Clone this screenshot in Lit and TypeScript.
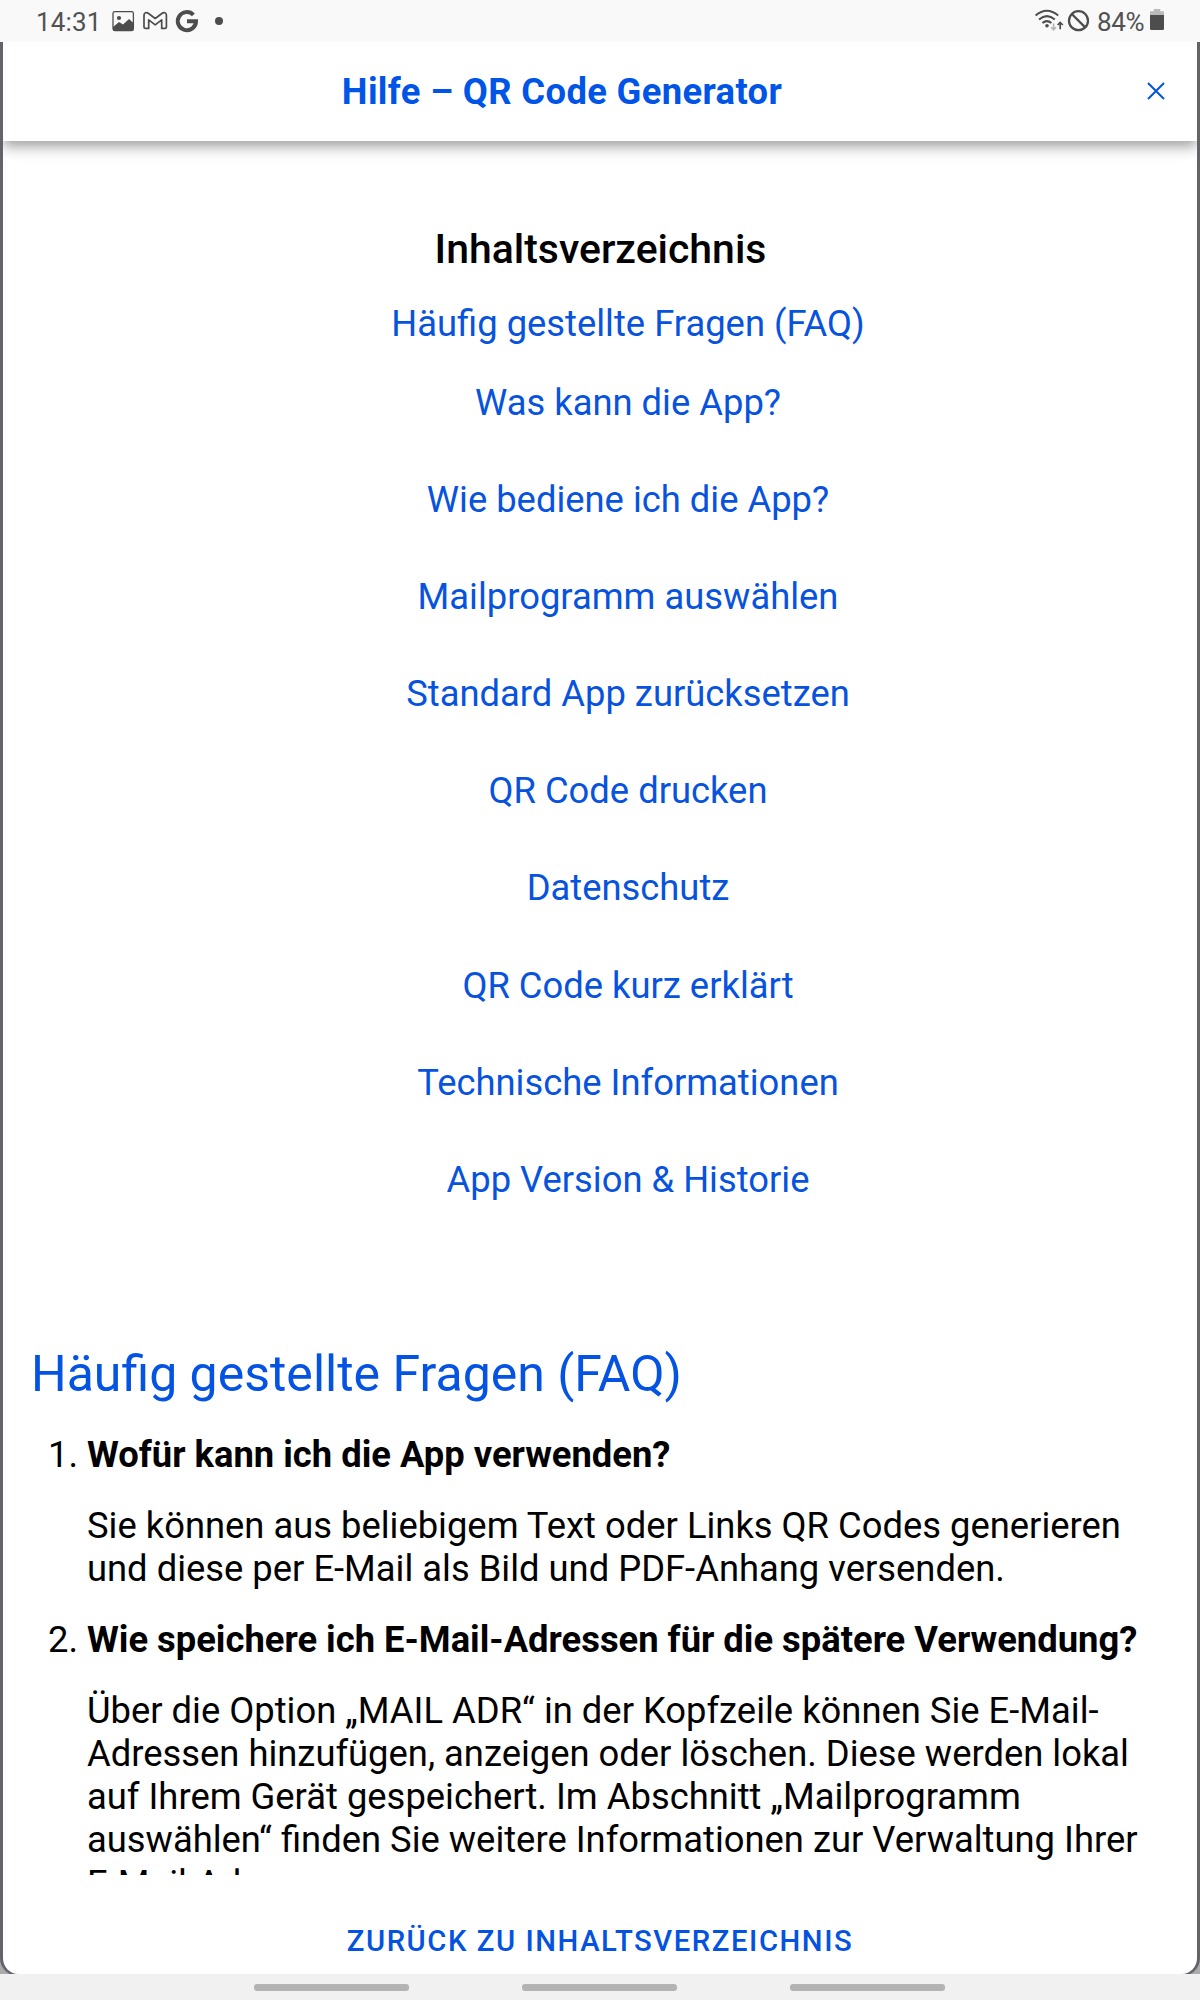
import { LitElement, html, css, svg } from "lit";
import { customElement } from "lit/decorators.js";

const TOC = [
  "Was kann die App?",
  "Wie bediene ich die App?",
  "Mailprogramm auswählen",
  "Standard App zurücksetzen",
  "QR Code drucken",
  "Datenschutz",
  "QR Code kurz erklärt",
  "Technische Informationen",
  "App Version & Historie",
];

const FAQ = [
  {
    q: "Wofür kann ich die App verwenden?",
    a: "Sie können aus beliebigem Text oder Links QR Codes generieren und diese per E-Mail als Bild und PDF-Anhang versenden.",
  },
  {
    q: "Wie speichere ich E-Mail-Adressen für die spätere Verwendung?",
    a: "Über die Option „MAIL ADR“ in der Kopfzeile können Sie E-Mail-Adressen hinzufügen, anzeigen oder löschen. Diese werden lokal auf Ihrem Gerät gespeichert. Im Abschnitt „Mailprogramm auswählen“ finden Sie weitere Informationen zur Verwaltung Ihrer E-Mail-Adressen.",
  },
];

@customElement("status-bar")
export class StatusBar extends LitElement {
  static styles = css`
    :host {
      display: flex;
      justify-content: space-between;
      height: 42px;
      background: #f9f9f9;
      color: #525252;
      font: 400 26px/42px Roboto, sans-serif;
    }
    .side { display: flex; }
    .left { padding-left: 36px; }
    .right { padding-right: 33px; }
    .time { width: 74px; letter-spacing: 0.150px; }
    .level { width: 51px; letter-spacing: -0.300px; }
    svg { display: block; }
    .time, .level { padding-top: 1px; box-sizing: border-box; }
  `;
  render() {
    return html`
      <div class="side left">
        <span class="time">14:31</span>
        <svg width="120" height="42" viewBox="110 0 120 42">
          ${svg`
          <rect x="113" y="11.7" width="20.4" height="18.8" rx="1.8" fill="none" stroke="#4d4d4d" stroke-width="1.3"/>
          <circle cx="119" cy="18" r="2.1" fill="#4d4d4d"/>
          <path d="M113 27l6-5 4 2.6 6-5.6 4.4 4v7.5H113z" fill="#4d4d4d"/>
          <path d="M144 27V15.200c0-2.600 2.500-3.300 4.200-2l7 5.300 7-5.300c1.700-1.300 4.200-.6 4.200 2V27c0 .9-.6 1.400-1.400 1.400h-3.300V19.800L155.200 24.800l-6.500-5v8.600h-3.300c-.8 0-1.400-.5-1.400-1.400z" fill="none" stroke="#4d4d4d" stroke-width="1.700" stroke-linejoin="round"/>
          <path d="M193.400 14.800A9.100 9.100 0 1 0 196 21.200H187" fill="none" stroke="#4d4d4d" stroke-width="4"/>
          <circle cx="219" cy="21" r="4" fill="#4d4d4d"/>`}
        </svg>
      </div>
      <div class="side right">
        <svg width="66" height="42" viewBox="1031 0 66 42">
          ${svg`
          <g fill="none" stroke="#4d4d4d" stroke-width="2">
            <path d="M1035.600 15.600q11.200-9.600 22.600 0"/>
            <path d="M1039 19.400q7.900-6.600 15.800 0"/>
            <path d="M1042.400 23q4.500-3.800 9 0"/>
          </g>
          <circle cx="1047" cy="25.700" r="1.800" fill="#4d4d4d"/>
          <path d="M1053.600 23.500v6.300M1051.200 27.300l2.400 2.500 2.400-2.500" fill="none" stroke="#b5b5b5" stroke-width="1.600"/>
          <path d="M1060.200 29.200v-6M1057.600 25l2.600-2.600 2.600 2.600" fill="none" stroke="#4d4d4d" stroke-width="1.700"/>
          <circle cx="1078.500" cy="20.700" r="9.500" fill="none" stroke="#4d4d4d" stroke-width="2.300"/>
          <path d="M1071.800 14l13.400 13.400" stroke="#4d4d4d" stroke-width="2.300"/>`}
        </svg>
        <span class="level">84%</span>
        <svg width="19" height="42" viewBox="1148 0 19 42">
          ${svg`
          <path d="M1153.700 9h6.600v2.300h3.700V15h-14v-3.700h3.700z" fill="#bababa"/>
          <path d="M1150 15h14v13.700q0 1.300-1.300 1.300h-11.400q-1.300 0-1.300-1.300z" fill="#4d4d4d"/>`}
        </svg>
      </div>
    `;
  }
}

@customElement("app-root")
export class AppRoot extends LitElement {
  static styles = css`
    :host {
      display: flex;
      flex-direction: column;
      width: 1200px;
      height: 2000px;
      overflow: hidden;
      background: #ababab;
      color: #000;
      font: 400 36.370px/43.200px Roboto, sans-serif;
    }
    .modal {
      flex: none;
      box-sizing: border-box;
      height: 1934px;
      display: flex;
      flex-direction: column;
      background: #fff;
      border: solid #636469;
      border-width: 0 3px 2px;
      border-radius: 0 0 18px 18px;
      overflow: hidden;
    }
    .header {
      flex: none;
      display: flex;
      align-items: center;
      height: 99px;
      z-index: 1;
      background: #fff;
      box-shadow: 0 4.500px 9px -2px rgba(0, 0, 0, 0.2), 0 9px 11px rgba(0, 0, 0, 0.14),
        0 2.250px 22px rgba(0, 0, 0, 0.12);
      color: #0054e6;
    }
    .title {
      flex: 1;
      margin: 0;
      padding-left: 72px;
      font-size: inherit;
      font-weight: 700;
      letter-spacing: 0.360px;
      text-align: center;
    }
    .close { flex: none; width: 148px; display: flex; padding-bottom: 2px; }
    .close svg { margin-left: 97.500px; }
    .content {
      flex: none;
      box-sizing: border-box;
      height: 1734px;
      padding: 84px 27px 0 28px;
      overflow: hidden;
    }
    .toc-title {
      margin: 0 0 28.400px;
      font-size: 40.950px;
      line-height: 48.600px;
      font-weight: 500;
      text-align: center;
    }
    .toc { margin: 0; padding: 0 0 0 55px; list-style: none; text-align: center; color: #0853de; }
    .toc li { margin-bottom: 53.900px; }
    .toc .lead { margin-bottom: 35.800px; }
    .faq-title {
      margin: 144.400px 0 28.200px;
      font-size: 50px;
      line-height: 59.400px;
      font-weight: 400;
      color: #0453e2;
    }
    .faq { margin: 0; padding-left: 56px; }
    .faq li { margin-bottom: 27.700px; }
    .faq p { margin: 27.700px 0 0; }
    .question { font-weight: 700; }
    .footer {
      flex: 1;
      display: flex;
      justify-content: center;
      align-items: center;
      padding-top: 35px;
      color: #0453e0;
      font-size: 29.250px;
      font-weight: 500;
      letter-spacing: 1.550px;
      text-transform: uppercase;
    }
    .nav {
      flex: 1;
      display: flex;
      justify-content: center;
      gap: 113px;
      margin-top: -2px;
      padding: 10px 1px 0 0;
      background: #f1f1f1;
      z-index: 1;
    }
    .nav i { width: 155px; height: 7px; border-radius: 3px; background: #b3b3b3; }
  `;
  render() {
    return html`
      <status-bar></status-bar>
      <div class="modal">
        <div class="header">
          <h1 class="title">Hilfe – QR Code Generator</h1>
          <div class="close">
            <svg width="18" height="18" viewBox="0 0 18 18">
              <path d="M1 1l16 16M17 1L1 17" stroke="#0054e0" stroke-width="2" />
            </svg>
          </div>
        </div>
        <div class="content">
          <h2 class="toc-title">Inhaltsverzeichnis</h2>
          <ul class="toc">
            <li class="lead">Häufig gestellte Fragen (FAQ)</li>
            ${TOC.map((t) => html`<li>${t}</li>`)}
          </ul>
          <h2 class="faq-title">Häufig gestellte Fragen (FAQ)</h2>
          <ol class="faq">
            ${FAQ.map((f) => html`<li><span class="question">${f.q}</span><p>${f.a}</p></li>`)}
          </ol>
        </div>
        <div class="footer">Zurück zu Inhaltsverzeichnis</div>
      </div>
      <div class="nav"><i></i><i></i><i></i></div>
    `;
  }
}
